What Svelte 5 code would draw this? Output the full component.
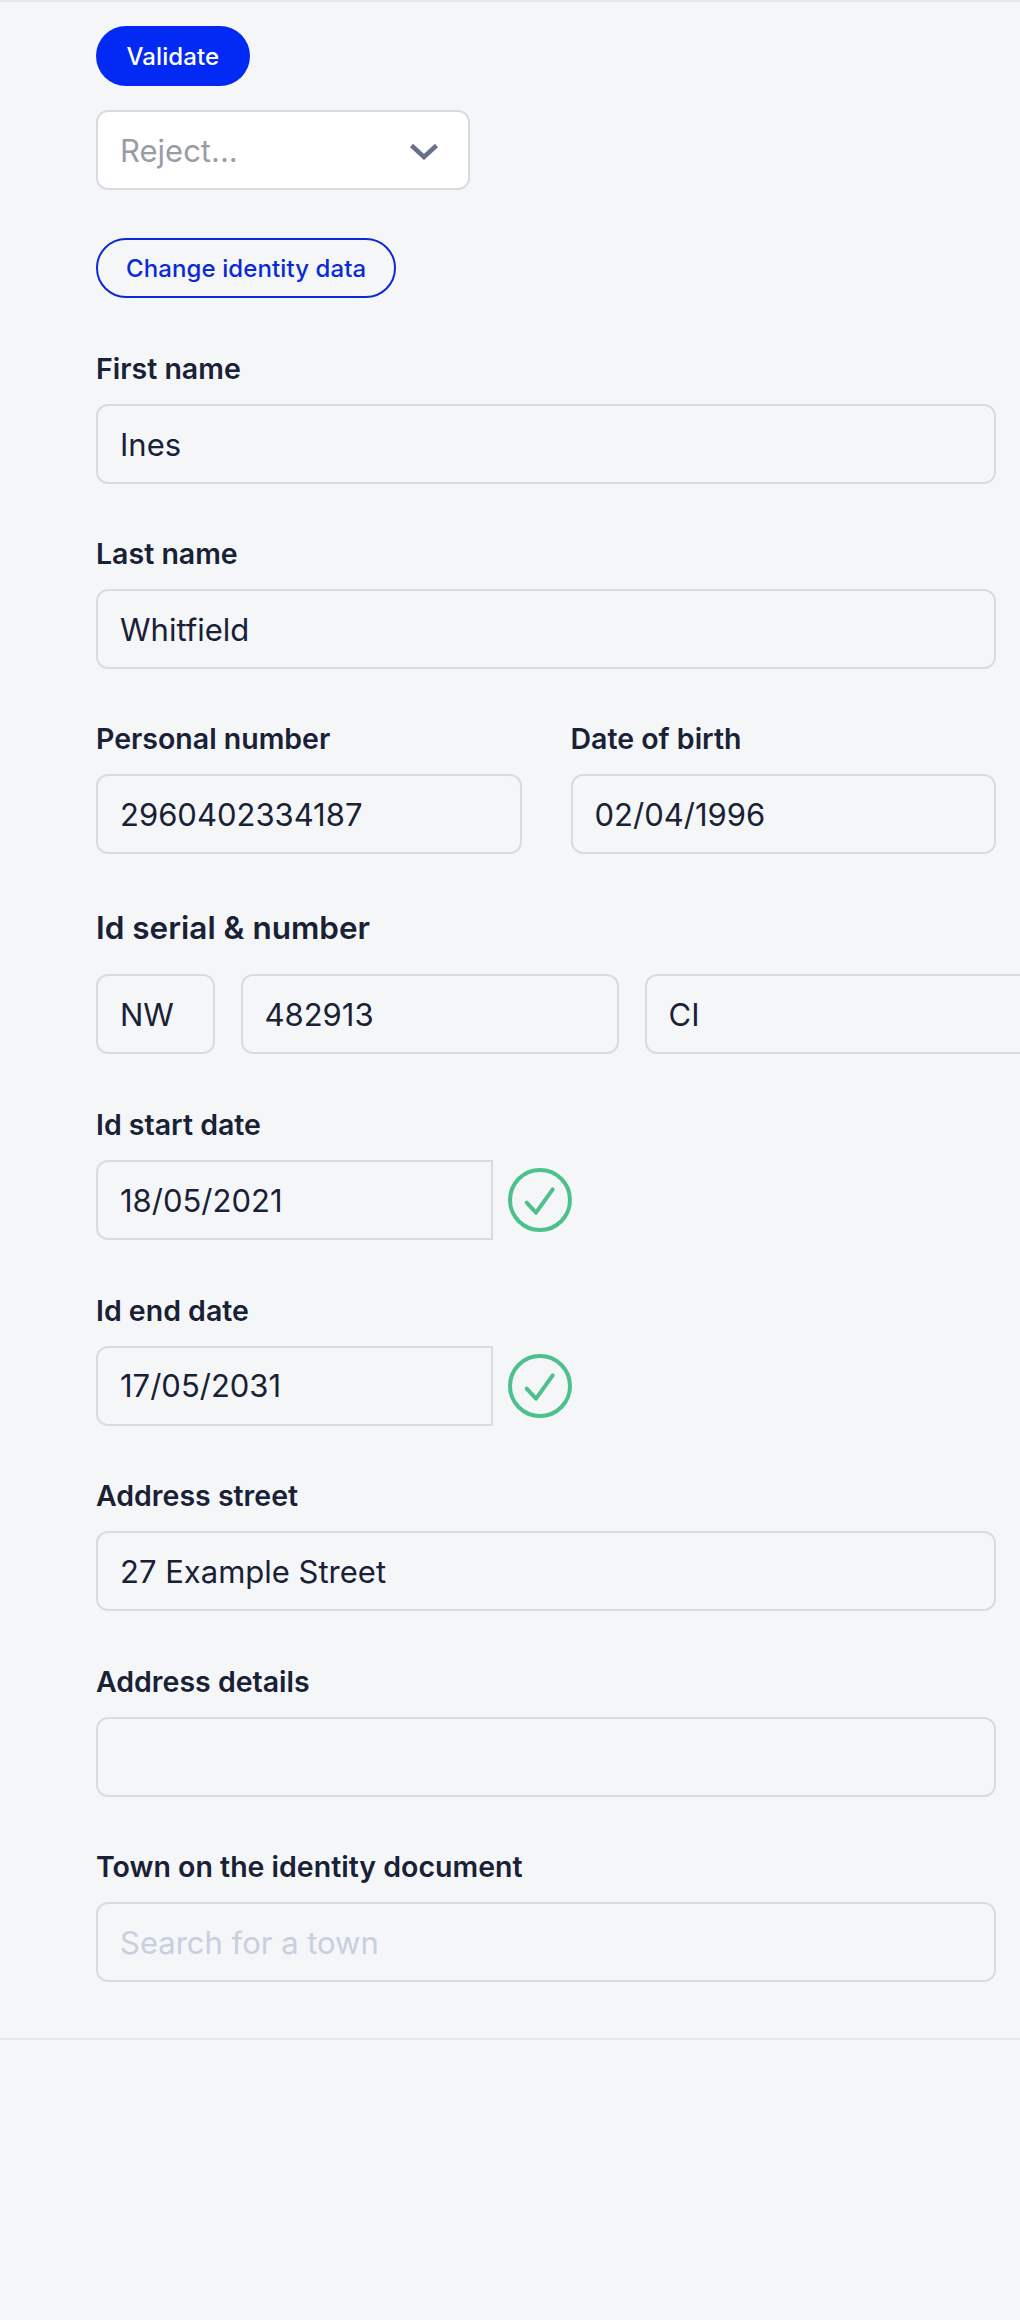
<script lang="ts">
	const dates = [
		{ label: 'Id start date', value: '18/05/2021' },
		{ label: 'Id end date', value: '17/05/2031' }
	];
</script>

<div class="page">
	<section class="panel">
		<button class="btn primary">Validate</button>

		<div class="reject">
			<span>Reject...</span>
			<svg class="chevron" width="28" height="17" viewBox="0 0 28 17" fill="none" stroke="#68708a" stroke-width="4.5">
				<path d="M1.500 2.500L14 14L26.500 2.500" />
			</svg>
		</div>

		<button class="btn outline">Change identity data</button>

		<div class="field first">
			<label for="first">First name</label>
			<input id="first" value="Ines" readonly />
		</div>

		<div class="field upper">
			<label for="last">Last name</label>
			<input id="last" value="Whitfield" readonly />
		</div>

		<div class="two">
			<div class="field upper">
				<label for="pn">Personal number</label>
				<input id="pn" value="2960402334187" readonly />
			</div>
			<div class="field upper">
				<label for="dob">Date of birth</label>
				<input id="dob" value="02/04/1996" readonly />
			</div>
		</div>

		<div class="field serial">
			<h3>Id serial &amp; number</h3>
			<div class="serial-row">
				<input class="series" value="NW" readonly />
				<input class="number" value="482913" readonly />
				<input class="kind" value="CI" readonly />
			</div>
		</div>

		{#each dates as d}
			<div class="field">
				<label for={d.label}>{d.label}</label>
				<div class="date-row">
					<input id={d.label} class="date" value={d.value} readonly />
					<svg width="64" height="64" viewBox="0 0 64 64" fill="none" stroke="#4cc08d" stroke-width="4">
						<circle cx="32" cy="32" r="30" />
						<path d="M18.700 34.700L28 44.700L44.700 21.300" stroke-linecap="round" stroke-linejoin="round" />
					</svg>
				</div>
			</div>
		{/each}

		<div class="field">
			<label for="street">Address street</label>
			<input id="street" value="27 Example Street" readonly />
		</div>

		<div class="field">
			<label for="details">Address details</label>
			<input id="details" value="" readonly />
		</div>

		<div class="field">
			<label for="town">Town on the identity document</label>
			<input id="town" placeholder="Search for a town" readonly />
		</div>
	</section>
</div>

<style>
	:global(body) {
		margin: 0;
		background: #f4f6f8;
		font-family: Inter, "Liberation Sans", sans-serif;
		color: #182135;
		overflow-x: hidden;
	}

	.page {
		height: 2320px;
		overflow: hidden;
	}

	.panel {
		border-top: 2px solid #e5e7eb;
		border-bottom: 2px solid #e5e7eb;
		padding: 24px 24px 56px 96px;
		display: flex;
		flex-direction: column;
		align-items: flex-start;
	}

	.btn {
		height: 60px;
		border-radius: 30px;
		font: 500 24px Inter, sans-serif;
		letter-spacing: 0.1px;
	}

	.primary {
		background: #0329f5;
		border: none;
		color: #fff;
		padding: 0 30.5px;
	}

	.outline {
		background: transparent;
		border: 2px solid #0a2ad6;
		color: #0a2ad6;
		padding: 0 28px;
	}

	.reject {
		box-sizing: border-box;
		width: 374px;
		height: 80px;
		margin: 24px 0 48px;
		padding: 0 30px 0 22px;
		display: flex;
		align-items: center;
		justify-content: space-between;
		background: #fff;
		border: 2px solid #d9dbe2;
		border-radius: 12px;
		font-size: 31px;
		color: #9a9ca5;
	}

	.chevron {
		margin-top: 3px;
	}

	.field {
		width: 100%;
		margin-top: 53.5px;
	}

	.field.first {
		margin-top: 54px;
	}

	.field.upper {
		margin-top: 53px;
	}

	.field.serial {
		margin-top: 56.5px;
		margin-bottom: 0.5px;
	}

	label,
	h3 {
		display: block;
		margin: 0 0 19px;
		font-size: 28.5px;
		font-weight: 600;
		line-height: 33px;
		color: #182135;
	}

	h3 {
		font-size: 31.5px;
		margin-bottom: 30.5px;
	}

	input {
		box-sizing: border-box;
		display: block;
		width: 100%;
		height: 80px;
		padding: 0 22px;
		background: transparent;
		border: 2px solid #d9dbe2;
		border-radius: 12px;
		font: 400 31px Inter, sans-serif;
		color: #182135;
		outline: none;
	}

	input::placeholder {
		color: #c8cfe0;
		opacity: 1;
	}

	.two {
		display: grid;
		grid-template-columns: 1fr 1fr;
		gap: 49px;
		width: 100%;
	}

	.serial-row {
		display: flex;
		gap: 25.5px;
		width: 1200px;
	}

	.series {
		width: 119px;
	}

	.number {
		width: 378.5px;
	}

	.kind {
		width: 500px;
	}

	.date-row {
		display: flex;
		align-items: center;
		gap: 15px;
	}

	.date {
		width: 397px;
		border-radius: 12px 0 0 12px;
	}
</style>
